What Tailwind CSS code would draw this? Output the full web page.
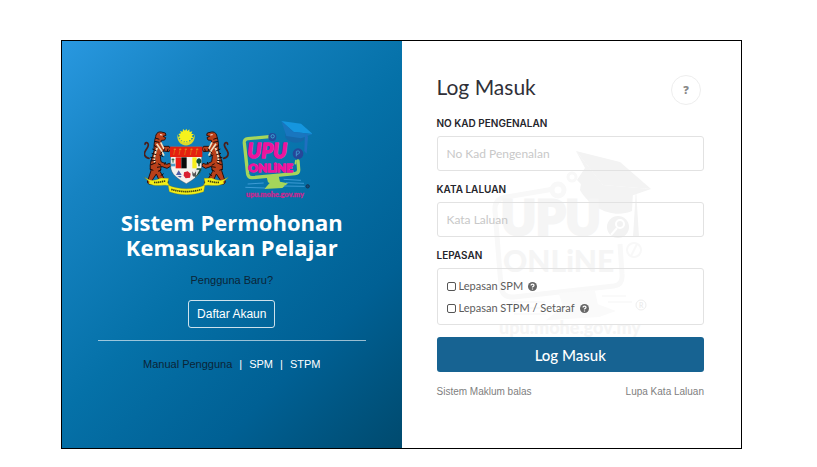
<!DOCTYPE html>
<html lang="ms">
<head>
  <meta charset="UTF-8">
  <meta name="viewport" content="width=device-width, initial-scale=1.0">
  <title>Sistem Permohonan Kemasukan Pelajar</title>
  <script src="https://cdn.jsdelivr.net/npm/@tailwindcss/browser@4"></script>
</head>
<body class="min-h-screen bg-white pt-10 pb-4 pl-[61px] pr-[75px] font-['Liberation_Sans',sans-serif] text-[12px] leading-4">
  <main class="grid grid-cols-2 border border-black outline outline-black/40 -outline-offset-1">

    <!-- Panel kiri -->
    <section class="flex flex-col items-center justify-center px-9 text-center bg-[linear-gradient(135deg,#2998e0_0%,#1683c2_22%,#0571a8_50%,#006094_75%,#004a6e_100%)]">
      <div class="flex">
        <svg class="w-[88px] h-[82px]" viewBox="12 -15 264 246" role="img" aria-label="Jata Negara">
          <!-- bulan dan bintang -->
          <path d="M113 34a26 26 0 1 0 50 0a25 23 0 0 1-50 0z" fill="#d9d92c"/>
          <path d="M139 17l3 7 6-5 1 8 8-2-3 7 8 2-7 5 6 5-8 2 3 7-8-2-2 8-6-5-3 7-4-7-6 5-1-8-8 2 3-7-8-3 7-4-5-6 8-2-3-7 8 2 1-8 6 5z" fill="#f5f21d"/>
          <!-- harimau -->
          <g>
            <path d="M27 106c-14-2-16-14-11-22 5-9 12-14 8-22-2-5-9-4-9 2" fill="none" stroke="#4b1d18" stroke-width="5" stroke-linecap="round"/>
            <path d="M48 36c3-8 9-10 16-9l12 3 2 7-9 3 8 4-3 7-10 1c-3 8 1 13 7 18l16 0 5 8-5 8-17-2-9 17 2 15 17 8 9-3 4 8-12 7-17-6-4 15 14 24 10 6-1 7-22-2-12-27-12 18 5 13-16-1-4-6 11-34c-8-19 6-42 9-60 0-14 0-27 5-42z" fill="#b9401a" stroke="#2b100d" stroke-width="3"/>
            <path d="M50 62l14 20 8 16M62 58l10 20M52 74c-6 16-12 26-8 44" fill="none" stroke="#f3e3c4" stroke-width="5"/>
            <path d="M46 45l12 4M44 55l14 3M42 67l10 7M37 78l13 6M35 91l14 4M31 103l15 2M31 114l16-2M32 126l16-7M54 122l9 5M51 133l13-2M54 145l10-5M62 158l9-6M40 142l-11-4M74 76l-3 8M84 77l-2 8M58 96l12 5M76 117l-2 8M67 86l-6 5" fill="none" stroke="#190b0a" stroke-width="3"/>
            <path d="M60 35l7 1" stroke="#fff" stroke-width="3"/>
          </g>
          <g transform="matrix(-1 0 0 1 278 0)">
            <path d="M27 106c-14-2-16-14-11-22 5-9 12-14 8-22-2-5-9-4-9 2" fill="none" stroke="#4b1d18" stroke-width="5" stroke-linecap="round"/>
            <path d="M48 36c3-8 9-10 16-9l12 3 2 7-9 3 8 4-3 7-10 1c-3 8 1 13 7 18l16 0 5 8-5 8-17-2-9 17 2 15 17 8 9-3 4 8-12 7-17-6-4 15 14 24 10 6-1 7-22-2-12-27-12 18 5 13-16-1-4-6 11-34c-8-19 6-42 9-60 0-14 0-27 5-42z" fill="#b9401a" stroke="#2b100d" stroke-width="3"/>
            <path d="M50 62l14 20 8 16M62 58l10 20M52 74c-6 16-12 26-8 44" fill="none" stroke="#f3e3c4" stroke-width="5"/>
            <path d="M46 45l12 4M44 55l14 3M42 67l10 7M37 78l13 6M35 91l14 4M31 103l15 2M31 114l16-2M32 126l16-7M54 122l9 5M51 133l13-2M54 145l10-5M62 158l9-6M40 142l-11-4M74 76l-3 8M84 77l-2 8M58 96l12 5M76 117l-2 8M67 86l-6 5" fill="none" stroke="#190b0a" stroke-width="3"/>
            <path d="M60 35l7 1" stroke="#fff" stroke-width="3"/>
          </g>
          <!-- perisai -->
          <path d="M92 71h93v58c0 26-23 39-46 53c-24-14-47-27-47-53z" fill="#f4f2ee" stroke="#333" stroke-width="1"/>
          <path d="M90 71h97v31H90z" fill="#e5200f"/>
          <path d="M105 76l-4 20M121 76l-4 20M138 76l-4 20M155 76l-4 20M172 76l-4 20" stroke="#d98a18" stroke-width="2" fill="none"/>
          <path d="M101 79h7M117 79h7M134 79h7M151 79h7M168 79h7" stroke="#e9a91b" stroke-width="2" fill="none"/>
          <path d="M107 103h17v33h-17z" fill="#ef1c14"/>
          <path d="M124 103h16v33h-16z" fill="#090909"/>
          <path d="M157 103h13v33h-13z" fill="#f7ee1c"/>
          <path d="M93 122h13v8H93z" fill="#4d9dc9"/>
          <path d="M99 106v13M95 110h8" stroke="#26613b" stroke-width="3"/>
          <path d="M175 130v-8c-9 0-7-15 2-16 9 1 10 16 2 16v8z" fill="#0b4933"/>
          <path d="M170 136h15c-2 12-9 20-20 28z" fill="#12493a"/>
          <path d="M163 140l6 18 10-18z" fill="#e0e2df"/>
          <path d="M116 142l-8 14h17zM112 159h13l-4 5z" fill="#5260a7"/>
          <path d="M132 148l11-3 9 7-2 12-13 2-6-8z" fill="#d92031"/>
          <path d="M157 145l5 7 6-7v12l-6 5-5-5z" fill="#545454"/>
          <!-- reben -->
          <path d="M13 163l15 7c14 4 24 0 35-5l23 1-3 13 7 11c-16-7-31 0-49-3l-15-5 2-6z" fill="#f4ef16" stroke="#77761b" stroke-width="1"/>
          <path d="M265 163l-15 7c-14 4-24 0-35-5l-23 1 3 13-7 11c16-7 31 0 49-3l15-5-2-6z" fill="#f4ef16" stroke="#77761b" stroke-width="1"/>
          <path d="M84 186c34 15 76 15 111 0l-4 20c-33 12-71 12-103 0z" fill="#f4ef16" stroke="#77761b" stroke-width="1"/>
          <path d="M42 178c13 2 23-3 35-4M237 178c-13 2-23-3-35-4M94 199c30 9 61 9 91 0" fill="none" stroke="#383a13" stroke-width="5" stroke-dasharray="4 2"/>
        </svg>

        <svg class="w-[88px] h-[82px]" viewBox="-12 15 264 246" role="img" aria-label="UPU Online">
          <path d="M108 70L36 77q-12 1-11 13l10 93q2 12 14 11l128-12q12-1 11-13l-2-25" fill="none" stroke="#a5d65b" stroke-width="10" stroke-linecap="round"/>
          <path d="M92 193l36-4 4 17 24 5-17 14-54 3 16-18-5-2z" fill="#a5d65b"/>
          <path d="M35 213l48-3M28 223l58 2M143 199l52 3M150 209l54 2M144 219l62 1" stroke="#3d9bd5" stroke-width="3"/>
          <path d="M148 52v22c15 18 42 20 56 6V54z" fill="#1568aa"/>
          <path d="M136 24l59 8 35 31-57-6z" fill="#1596df"/>
          <path d="M136 24l37 33 57 6-35 13-44-7z" fill="#1976bf"/>
          <path d="M207 62l9 9-4 51-7-8z" fill="#206fc0"/>
          <circle cx="109" cy="72" r="12" fill="#244b9c"/>
          <circle cx="110" cy="70" r="5" fill="none" stroke="#39a9d4" stroke-width="3"/>
          <circle cx="186" cy="122" r="16" fill="#264799"/>
          <path d="M181 130v-15q11-4 9 5-2 5-9 4" fill="none" stroke="#3d93cc" stroke-width="3"/>
          <path d="M180 141l-2 13" stroke="#a5d65b" stroke-width="5"/>
          <g class="font-[Lato,sans-serif] font-black" fill="#ed149d" stroke="#ed149d" stroke-width="4" stroke-linejoin="round">
            <text x="34" y="135" font-size="60" font-style="italic">UPU</text>
            <text x="37" y="177" font-size="36">ONLiNE</text>
          </g>
          <text x="30" y="253" font-size="22" class="font-[Lato,sans-serif] font-black" fill="#c42991" stroke="#c42991" stroke-width="1">upu.mohe.gov.my</text>
          <circle cx="215" cy="220" r="5" fill="#164b77" stroke="#173352" stroke-width="3"/>
        </svg>
      </div>

      <h1 class="mt-[10px] font-['Open_Sans',sans-serif] text-[22px] font-bold leading-[25px] text-white">Sistem Permohonan<br>Kemasukan Pelajar</h1>
      <p class="mt-3 text-[11px] text-[#0b2436]">Pengguna Baru?</p>
      <button type="button" class="mt-3 h-7 rounded-[3px] border border-white/80 px-2 text-white">Daftar Akaun</button>
      <hr class="mt-3 w-full border-white/60">
      <div class="mt-[15px] flex gap-[7px] text-[11px] text-white">
        <span class="text-[#0b2436]">Manual Pengguna</span>
        <span>|</span>
        <a href="#">SPM</a>
        <span>|</span>
        <a href="#">STPM</a>
      </div>
    </section>

    <!-- Panel kanan -->
    <section class="relative pl-[35px] pr-[37px] pt-[34px] pb-12 font-[Lato,sans-serif]">
      <svg class="pointer-events-none absolute left-[79px] top-[104px] h-[195px] w-[170px]" viewBox="0 0 170 195" aria-hidden="true">
        <g fill="none" stroke="#f8f8f8" stroke-width="5">
          <path d="M73 44L25 52q-12 2-11 14l6 75q1 12 13 11l100-11q9-1 8-12l-2-30"/>
          <circle cx="77" cy="45" r="6"/>
          <circle cx="91" cy="32" r="4" stroke-width="3"/>
          <circle cx="153" cy="105" r="7" stroke-width="2"/>
          <path d="M150 111l6-12" stroke-width="2"/>
        </g>
        <path d="M95 6l44 11 31 27-48-4zM101 32l18 16 33-1-1 19c-18 8-41-2-52-21zM155 44l3 48h-6z" fill="#f3f3f3"/>
        <path d="M95 6l27 34 48 4-26 9-36-6-12-12 8-12z" fill="#f3f3f3"/>
        <circle cx="137" cy="82" r="11" fill="#f2f2f2"/>
        <circle cx="139" cy="79" r="4" fill="none" stroke="#fff" stroke-width="2"/>
        <path d="M136 83l-6 7" stroke="#fff" stroke-width="2"/>
        <path d="M79 149l34-3 3 14 16 6-14 5-50 3 15-12zM30 157h34M26 163h39M33 169h32M121 151h24M127 157h24" fill="#fafafa" stroke="#fafafa" stroke-width="2"/>
        <g class="font-[Lato,sans-serif] font-black" fill="#f5f5f5">
          <text x="20" y="90" font-size="47" stroke="#f5f5f5" stroke-width="3">UPU</text>
          <text x="22" y="127" font-size="30">ONLiNE</text>
          <text x="18" y="189" font-size="18">upu.mohe.gov.my</text>
        </g>
        <circle cx="160" cy="160" r="5" fill="none" stroke="#eee"/>
        <text x="158" y="163" font-size="7" fill="#e8e8e8">R</text>
      </svg>

      <form class="relative">
        <div class="flex h-[30px] items-start justify-between pr-[3px]">
          <h2 class="text-[21px] leading-6 text-[#303038]">Log Masuk</h2>
          <button type="button" aria-label="Bantuan" class="size-[30px] rounded-full border border-[#eeeeee] font-['Open_Sans',sans-serif] text-[11px] font-extrabold text-[#888888]">?</button>
        </div>

        <label for="ic" class="mt-[10px] block font-[Inter,sans-serif] text-[10px] font-semibold uppercase text-[#25252b]">No Kad Pengenalan</label>
        <input id="ic" type="text" placeholder="No Kad Pengenalan" class="mt-[5px] block h-[35px] w-full rounded-[3px] border border-[#e2e2e2] px-[9px] text-[12px] placeholder:text-[#c8c8c8]">

        <label for="pwd" class="mt-[10px] block font-[Inter,sans-serif] text-[10px] font-semibold uppercase text-[#25252b]">Kata Laluan</label>
        <input id="pwd" type="password" placeholder="Kata Laluan" class="mt-[5px] block h-[35px] w-full rounded-[3px] border border-[#e2e2e2] px-[9px] text-[12px] placeholder:text-[#c8c8c8]">

        <fieldset class="mt-[10px]">
          <legend class="font-[Inter,sans-serif] text-[10px] font-semibold uppercase text-[#25252b]">Lepasan</legend>
          <div class="mt-[5px] rounded-[3px] border border-[#e2e2e2] px-[9px] pt-[6px] pb-[5px] text-[11px] leading-[22px] text-[#5c5c5c]">
            <div class="flex items-center">
              <input id="spm" type="checkbox" class="size-[9px] appearance-none rounded-[2px] border border-[#555555] checked:bg-[#176392]">
              <label for="spm" class="ml-[3px]">Lepasan SPM</label>
              <svg class="ml-[5px] size-[9px]" viewBox="0 0 18 18" aria-hidden="true"><circle cx="9" cy="9" r="9" fill="#666"/><path d="M6 7q0-3 3-3t3 3q0 1-3 3v1M9 13v2" fill="none" stroke="#fff" stroke-width="2.5"/></svg>
            </div>
            <div class="flex items-center">
              <input id="stpm" type="checkbox" class="size-[9px] appearance-none rounded-[2px] border border-[#555555] checked:bg-[#176392]">
              <label for="stpm" class="ml-[3px]">Lepasan STPM / Setaraf</label>
              <svg class="ml-[5px] size-[9px]" viewBox="0 0 18 18" aria-hidden="true"><circle cx="9" cy="9" r="9" fill="#666"/><path d="M6 7q0-3 3-3t3 3q0 1-3 3v1M9 13v2" fill="none" stroke="#fff" stroke-width="2.5"/></svg>
            </div>
          </div>
        </fieldset>

        <button type="submit" class="mt-3 block h-[35px] w-full rounded-[3px] bg-[#176392] text-[15px] font-medium text-white">Log Masuk</button>

        <div class="mt-3 flex justify-between font-['Liberation_Sans',sans-serif] text-[10px] text-[#808080]">
          <a href="#">Sistem Maklum balas</a>
          <a href="#">Lupa Kata Laluan</a>
        </div>
      </form>
    </section>
  </main>
</body>
</html>
